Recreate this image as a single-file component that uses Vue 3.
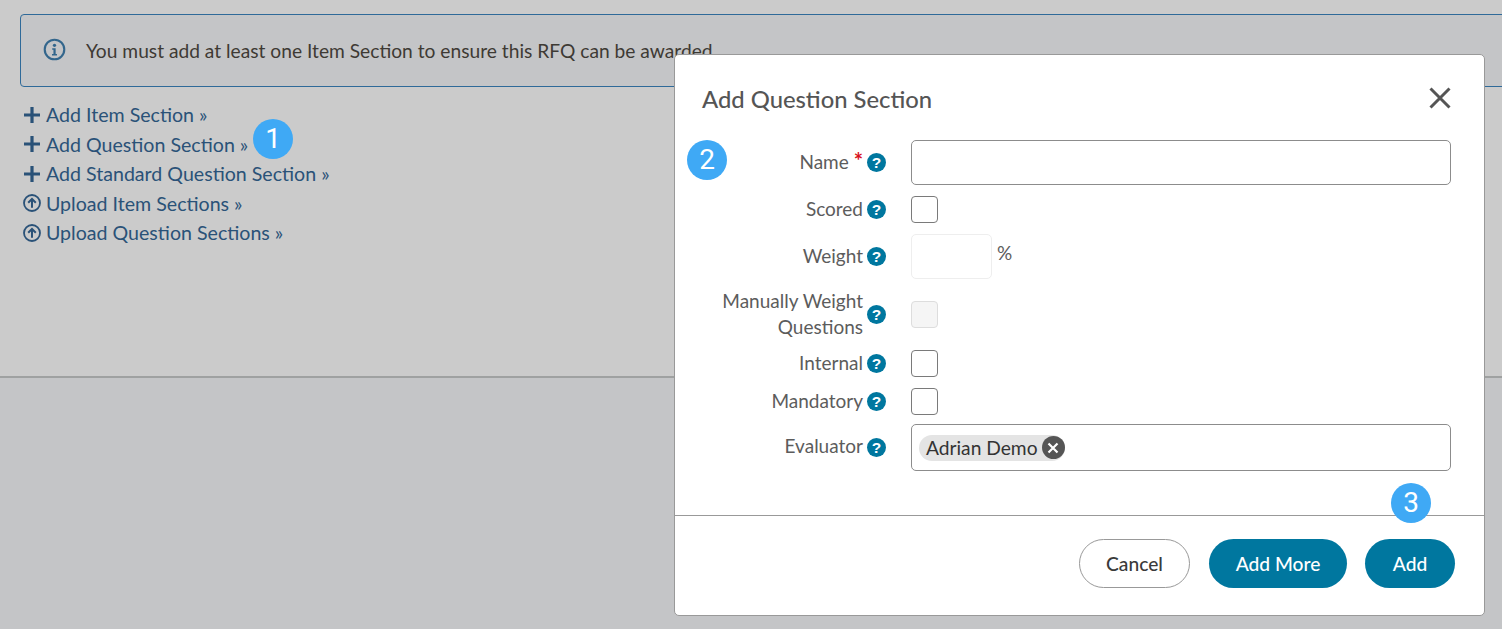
<script setup>
const links = [
  { icon: 'plus', text: 'Add Item Section »' },
  { icon: 'plus', text: 'Add Question Section »' },
  { icon: 'plus', text: 'Add Standard Question Section »' },
  { icon: 'up', text: 'Upload Item Sections »' },
  { icon: 'up', text: 'Upload Question Sections »' }
]
</script>

<template>
  <div class="page">
    <section class="top">
      <div class="alert">
        <svg class="info" viewBox="0 0 24 24" width="23" height="23">
          <circle cx="12" cy="12" r="10.2" fill="none" stroke="#33668c" stroke-width="2.2" />
          <circle cx="12" cy="7.6" r="1.7" fill="#33668c" />
          <path d="M9.6 10.6h3.6v6h1.4v1.7H9.4v-1.7h1.5v-4.3H9.6z" fill="#33668c" />
        </svg>
        <span>You must add at least one Item Section to ensure this RFQ can be awarded</span>
      </div>
      <ul class="links">
        <li v-for="l in links" :key="l.text">
          <svg v-if="l.icon === 'plus'" class="lic" viewBox="0 0 18 18" width="18" height="18">
            <path d="M7.4 1h3.2v6.4H17v3.2h-6.4V17H7.4v-6.4H1V7.4h6.4z" fill="#2a5278" />
          </svg>
          <svg v-else class="lic" viewBox="0 0 18 18" width="18" height="18">
            <circle cx="9" cy="9" r="8" fill="none" stroke="#2a5278" stroke-width="1.8" />
            <path d="M9 13.8V5M5.2 8.8 9 5l3.8 3.8" fill="none" stroke="#2a5278" stroke-width="2" />
          </svg>
          <a>{{ l.text }}</a>
        </li>
      </ul>
    </section>

    <div class="badge b1">1</div>

    <div class="modal">
      <header class="mhead">
        <h2>Add Question Section</h2>
        <svg class="close" viewBox="0 0 24 24" width="24" height="24">
          <path d="M2.5 2.5l19 19M21.5 2.5l-19 19" stroke="#555" stroke-width="3" fill="none" />
        </svg>
      </header>

      <form class="form">
        <label class="lab">Name <b class="req">*</b></label>
        <span class="help">?</span>
        <div class="inp"></div>

        <label class="lab">Scored</label>
        <span class="help">?</span>
        <div class="chk"></div>

        <label class="lab">Weight</label>
        <span class="help">?</span>
        <div class="weight"><div class="inp short"></div><span class="pct">%</span></div>

        <label class="lab two">Manually Weight<br />Questions</label>
        <span class="help">?</span>
        <div class="chk off"></div>

        <label class="lab">Internal</label>
        <span class="help">?</span>
        <div class="chk"></div>

        <label class="lab">Mandatory</label>
        <span class="help">?</span>
        <div class="chk"></div>

        <label class="lab ev">Evaluator</label>
        <span class="help ev">?</span>
        <div class="inp tags ev">
          <span class="tag">Adrian Demo
            <span class="tagx">
              <svg viewBox="0 0 12 12" width="12" height="12"><path d="M1.5 1.5l9 9M10.5 1.5l-9 9" stroke="#fff" stroke-width="2.2" /></svg>
            </span>
          </span>
        </div>
      </form>

      <footer class="foot">
        <button type="button" class="btn ghost">Cancel</button>
        <button type="button" class="btn solid more">Add More</button>
        <button type="button" class="btn solid add">Add</button>
      </footer>
    </div>

    <div class="badge b2">2</div>
    <div class="badge b3">3</div>
  </div>
</template>

<style scoped>
.page {
  position: relative;
  width: 1502px;
  height: 629px;
  overflow: hidden;
  background: #c4c5c7;
  font-family: "Lato", "Open Sans", sans-serif;
}
.top {
  height: 378px;
  box-sizing: border-box;
  padding: 14px 0 0 20px;
  background: #cbcbcb;
  border-bottom: 2px solid #9fa1a1;
}
.alert {
  display: flex;
  align-items: center;
  box-sizing: border-box;
  height: 73px;
  margin-right: -40px;
  padding-left: 22px;
  padding-bottom: 1px;
  background: #c4c5c7;
  border: 1px solid #2f6a99;
  border-radius: 4px;
  color: #3e3a34;
  font-size: 19.2px;
}
.info { margin: -2px 20px 0 0; }
.links {
  list-style: none;
  margin: 13px 0 0;
  padding: 0 0 0 3px;
}
.links li {
  display: flex;
  align-items: center;
  height: 29.5px;
  color: #2a5278;
  font-size: 19.6px;
}
.lic { margin-right: 5px; }
.badge {
  position: absolute;
  width: 40px;
  height: 40px;
  border-radius: 50%;
  background: #3fa9f5;
  color: #fff;
  font-family: "Roboto", sans-serif;
  font-size: 28px;
  line-height: 40px;
  text-align: center;
}
.b1 { left: 253px; top: 119px; }
.b2 { left: 687px; top: 140px; }
.b3 { left: 1391px; top: 483px; }
.modal {
  position: absolute;
  left: 674px;
  top: 54px;
  width: 811px;
  height: 562px;
  box-sizing: border-box;
  background: #fff;
  border: 1px solid #999;
  border-radius: 5px;
  display: flex;
  flex-direction: column;
}
.mhead {
  display: flex;
  justify-content: space-between;
  align-items: center;
  height: 85px;
  padding: 0 32px 0 27px;
}
.mhead h2 {
  margin: 2px 0 0;
  font-size: 23.8px;
  font-weight: 500;
  color: #555;
}
.form {
  display: grid;
  grid-template-columns: 191px 20px 564px;
  grid-template-rows: 45px 27px 45px 49px 27px 27px 47px;
  row-gap: 11px;
  align-items: center;
  height: 331px;
  margin-left: 1px;
}
.lab {
  justify-self: end;
  text-align: right;
  color: #5c5c5c;
  font-size: 19px;
  line-height: 26px;
  padding-right: 4px;
  padding-bottom: 2px;
}
.lab.ev { margin-top: -6px; }
.help.ev { margin-top: -4px; }
.inp.ev { margin-top: -4px; }
.req {
  color: #d8121c;
  font-weight: 700;
  font-size: 22px;
  line-height: 0;
}
.help {
  width: 19px;
  height: 19px;
  border-radius: 50%;
  background: #00779f;
  color: #fff;
  font-family: "Liberation Sans", sans-serif;
  font-weight: 700;
  font-size: 15.5px;
  line-height: 19px;
  text-align: center;
}
.form > .inp, .form > .chk, .form > .weight { margin-left: 24px; }
.inp {
  box-sizing: border-box;
  height: 45px;
  width: 540px;
  border: 1px solid #8c8c8c;
  border-radius: 5px;
}
.chk {
  box-sizing: border-box;
  width: 27px;
  height: 27px;
  border: 1px solid #7a7a7a;
  border-radius: 4px;
}
.chk.off {
  background: #f5f5f5;
  border-color: #ddd;
}
.weight {
  display: flex;
  align-items: flex-start;
  height: 45px;
}
.inp.short {
  width: 81px;
  margin: 0;
  border-color: #eee;
}
.pct {
  margin: 7px 0 0 5px;
  color: #5c5c5c;
  font-size: 19px;
}
.tags {
  height: 47px;
  display: flex;
  align-items: center;
  padding-left: 7px;
}
.tag {
  display: flex;
  align-items: center;
  height: 26px;
  padding-left: 7px;
  border-radius: 13px;
  background: #e4e4e4;
  color: #333;
  font-size: 19.2px;
}
.tagx {
  display: flex;
  align-items: center;
  justify-content: center;
  width: 23px;
  height: 23px;
  margin-left: 4px;
  border-radius: 50%;
  background: #555;
}
.foot {
  flex: 1;
  display: flex;
  justify-content: flex-end;
  align-items: flex-start;
  border-top: 1px solid #999;
  margin-top: 44px;
  padding: 23px 29px 0 0;
}
.btn {
  height: 49px;
  border-radius: 25px;
  font-family: inherit;
  font-size: 19.2px;
  font-weight: 500;
  cursor: pointer;
}
.ghost {
  width: 111px;
  background: #fff;
  border: 1px solid #999;
  color: #3a3a3a;
  margin-right: 19px;
}
.solid {
  background: #00779f;
  border: 0;
  color: #fff;
}
.more { width: 138px; margin-right: 18px; }
.add { width: 90px; }
</style>
